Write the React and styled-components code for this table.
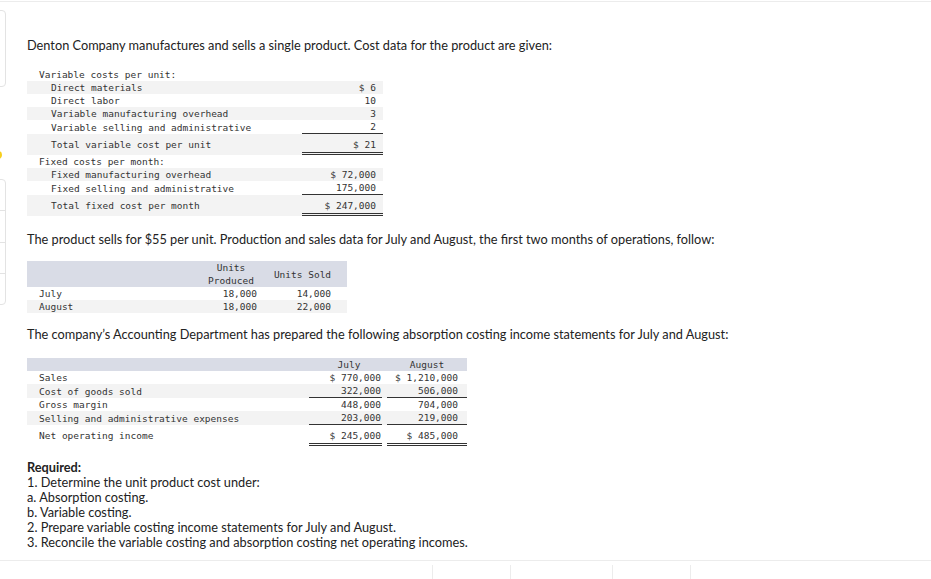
import React from 'react';
import styled, { createGlobalStyle } from 'styled-components';

const GlobalStyle = createGlobalStyle`
  html, body {
    margin: 0;
    padding: 0;
    background: #ffffff;
  }
  body {
    font-family: Lato, 'Open Sans', sans-serif;
    color: #222222;
  }
`

const Frame = styled.div`
  width: 931px;
  height: 578px;
  margin-top: 1px;
  border-top: 1px solid #ececec;
  overflow: hidden;
  display: flex;
  flex-direction: column;`

const Body = styled.div`
  display: flex;
  flex: 1;`

const Sidebar = styled.div`
  width: 6px;
  flex-shrink: 0;
  display: flex;
  flex-direction: column;`

const SideCard = styled.div`
  margin-left: -20px;
  margin-top: ${p => p.$top}px;
  width: 24px;
  height: ${p => p.$height}px;
  border: 1px solid #e3e3e3;
  border-radius: 4px;
  display: flex;
  flex-direction: column;`

const SideSlot = styled.div`
  flex: 1;
  border-top: ${p => (p.$first ? 'none' : '1px solid #e3e3e3')};`

const Marker = styled.div`
  margin-left: -6px;
  margin-top: ${p => p.$top}px;
  width: 8px;
  height: 8px;
  border-radius: 50%;
  background: #f7cf1d;`

const Main = styled.div`
  flex: 1;
  padding: 36px 0 0 21px;
  display: flex;
  flex-direction: column;`

const Para = styled.p`
  margin: ${p => p.$gap}px 0 0 0;
  font-size: 12.75px;
  line-height: 15px;
  white-space: nowrap;`

const Sheet = styled.table`
  margin-top: ${p => p.$gap}px;
  width: ${p => p.$width}px;
  border-collapse: collapse;
  border-spacing: 0;
  table-layout: fixed;
  font-family: 'DejaVu Sans Mono', 'Liberation Mono', monospace;
  font-size: 9.5px;
  color: #333333;`

const Row = styled.tr`
  background: ${p => (p.$shade ? '#f3f3f3' : 'transparent')};`

const HeadRow = styled.tr`
  background: #d9dce6;`

const Label = styled.td`
  padding: ${p => (p.$tall ? '4px 0 1px' : '0')};
  padding-left: ${p => p.$indent}px;
  line-height: 13px;
  white-space: nowrap;
  vertical-align: ${p => (p.$tall ? 'top' : 'middle')};`

const ValueCell = styled.td`
  padding: 0 0 0 ${p => p.$inset || 0}px;
  vertical-align: top;`

const Figure = styled.div`
  line-height: 13px;
  text-align: right;
  white-space: nowrap;
  padding-right: ${p => p.$pad}px;
  padding-top: ${p => (p.$tall ? 4 : 0)}px;
  padding-bottom: ${p => (p.$tall ? 1 : 0)}px;
  border-bottom: ${p =>
    p.$rule === 'double' ? '3px double #333' : p.$rule === 'single' ? '1px solid #333' : 'none'};`

const HeadCell = styled.th`
  font-weight: normal;
  line-height: 13px;
  padding: 0 ${p => p.$right || 0}px 0 ${p => p.$left || 0}px;
  text-align: ${p => p.$align || 'center'};
  vertical-align: middle;
  white-space: nowrap;`

const Required = styled.div`
  margin-top: 14px;
  font-size: 12.75px;
  line-height: 15px;
  white-space: nowrap;`

const Strong = styled.div`
  font-weight: 700;`

const Footer = styled.div`
  margin-top: auto;
  height: 15px;
  border-top: 1px solid #ececec;
  display: flex;
  padding-top: 4px;
  padding-left: 432px;`

const FooterCell = styled.div`
  width: ${p => p.$width}px;
  border-left: 1px solid #ececec;`

const costs = [
  { label: 'Variable costs per unit:', indent: 12 },
  { label: 'Direct materials', indent: 24, value: '$ 6', shade: true },
  { label: 'Direct labor', indent: 24, value: '10' },
  { label: 'Variable manufacturing overhead', indent: 24, value: '3', shade: true },
  { label: 'Variable selling and administrative', indent: 24, value: '2', rule: 'single' },
  { label: 'Total variable cost per unit', indent: 24, value: '$ 21', shade: true, rule: 'double', tall: true },
  { label: 'Fixed costs per month:', indent: 12 },
  { label: 'Fixed manufacturing overhead', indent: 24, value: '$ 72,000', shade: true },
  { label: 'Fixed selling and administrative', indent: 24, value: '175,000', rule: 'single' },
  { label: 'Total fixed cost per month', indent: 24, value: '$ 247,000', shade: true, rule: 'double', tall: true },
]

const production = [
  { month: 'July', produced: '18,000', sold: '14,000' },
  { month: 'August', produced: '18,000', sold: '22,000', shade: true },
]

const income = [
  { label: 'Sales', july: '$ 770,000', august: '$ 1,210,000' },
  { label: 'Cost of goods sold', july: '322,000', august: '506,000', shade: true, rule: 'single' },
  { label: 'Gross margin', july: '448,000', august: '704,000' },
  { label: 'Selling and administrative expenses', july: '203,000', august: '219,000', shade: true, rule: 'single' },
  { label: 'Net operating income', july: '$ 245,000', august: '$ 485,000', rule: 'double', tall: true },
]

function CostTable() {
  return (
    <Sheet $gap={15} $width={356}>
      <colgroup>
        <col style={{ width: 275 }} />
        <col style={{ width: 81 }} />
      </colgroup>
      <tbody>
        {costs.map(c => (
          <Row key={c.label} $shade={c.shade}>
            <Label $indent={c.indent} $tall={c.tall}>{c.label}</Label>
            <ValueCell>
              {c.value && (
                <Figure $pad={7} $rule={c.rule} $tall={c.tall}>{c.value}</Figure>
              )}
            </ValueCell>
          </Row>
        ))}
      </tbody>
    </Sheet>
  );
}

function ProductionTable() {
  return (
    <Sheet $gap={14} $width={320}>
      <colgroup>
        <col style={{ width: 173 }} />
        <col style={{ width: 62 }} />
        <col style={{ width: 85 }} />
      </colgroup>
      <thead>
        <HeadRow>
          <HeadCell />
          <HeadCell>Units<br />Produced</HeadCell>
          <HeadCell $right={4}>Units Sold</HeadCell>
        </HeadRow>
      </thead>
      <tbody>
        {production.map(r => (
          <Row key={r.month} $shade={r.shade}>
            <Label $indent={12}>{r.month}</Label>
            <ValueCell><Figure $pad={5}>{r.produced}</Figure></ValueCell>
            <ValueCell><Figure $pad={16}>{r.sold}</Figure></ValueCell>
          </Row>
        ))}
      </tbody>
    </Sheet>
  );
}

function IncomeTable() {
  return (
    <Sheet $gap={16} $width={440}>
      <colgroup>
        <col style={{ width: 275 }} />
        <col style={{ width: 80 }} />
        <col style={{ width: 85 }} />
      </colgroup>
      <thead>
        <HeadRow>
          <HeadCell />
          <HeadCell $left={14}>July</HeadCell>
          <HeadCell $left={5}>August</HeadCell>
        </HeadRow>
      </thead>
      <tbody>
        {income.map(r => (
          <Row key={r.label} $shade={r.shade}>
            <Label $indent={12} $tall={r.tall}>{r.label}</Label>
            <ValueCell $inset={7}>
              <Figure $pad={1} $rule={r.rule} $tall={r.tall}>{r.july}</Figure>
            </ValueCell>
            <ValueCell $inset={5}>
              <Figure $pad={9} $rule={r.rule} $tall={r.tall}>{r.august}</Figure>
            </ValueCell>
          </Row>
        ))}
      </tbody>
    </Sheet>
  );
}

export default function App() {
  return (
    <>
      <GlobalStyle />
      <Frame>
        <Body>
          <Sidebar>
            <SideCard $top={8} $height={75} />
            <Marker $top={64} />
            <SideCard $top={20} $height={124}>
              <SideSlot $first />
              <SideSlot />
              <SideSlot />
              <SideSlot />
            </SideCard>
          </Sidebar>
          <Main>
            <Para $gap={0}>
              Denton Company manufactures and sells a single product. Cost data for the product are given:
            </Para>
            <CostTable />
            <Para $gap={16}>
              The product sells for $55 per unit. Production and sales data for July and August, the first two months of operations, follow:
            </Para>
            <ProductionTable />
            <Para $gap={14}>
              The company’s Accounting Department has prepared the following absorption costing income statements for July and August:
            </Para>
            <IncomeTable />
            <Required>
              <Strong>Required:</Strong>
              <div>1. Determine the unit product cost under:</div>
              <div>a. Absorption costing.</div>
              <div>b. Variable costing.</div>
              <div>2. Prepare variable costing income statements for July and August.</div>
              <div>3. Reconcile the variable costing and absorption costing net operating incomes.</div>
            </Required>
          </Main>
        </Body>
        <Footer>
          <FooterCell $width={77} />
          <FooterCell $width={101} />
          <FooterCell $width={77} />
          <FooterCell $width={10} />
        </Footer>
      </Frame>
    </>
  );
}
